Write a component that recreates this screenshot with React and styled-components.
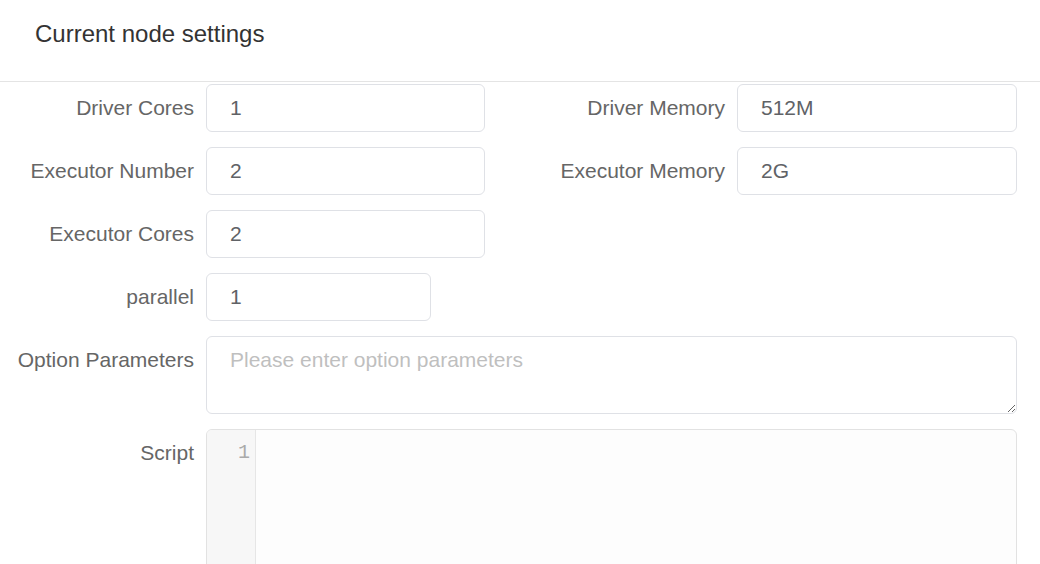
import React from 'react'
import styled, { createGlobalStyle } from 'styled-components'

const GlobalStyle = createGlobalStyle`
    body {
        margin: 0;
        background: #fff;
        font-family: "Liberation Sans", Arial, sans-serif;
        overflow: hidden;
    }
`

const Panel = styled.div`
    width: 1040px;
    height: 564px;
    overflow: hidden;
`

const Header = styled.div`
    height: 82px;
    box-sizing: border-box;
    padding: 20px 35px 0;
    border-bottom: 1px solid #e4e4e4;
    font-size: 24px;
    line-height: 28px;
    color: #333;
`

const Form = styled.div`
    padding-top: 2px;
    width: 1017px;
`

const Row = styled.div`
    display: grid;
    grid-template-columns: 485px 486px;
    column-gap: 46px;
    margin-bottom: 15px;
`

const Item = styled.div`
    display: grid;
    grid-template-columns: 194px 1fr;
    column-gap: 12px;
    align-items: start;
    margin-bottom: ${p => p.$mb || 0}px;
`

const Label = styled.label`
    text-align: right;
    font-size: 21px;
    line-height: 48px;
    color: #666;
    white-space: nowrap;
`

const Input = styled.input`
    box-sizing: border-box;
    width: ${p => p.$w ? `${p.$w}px` : '100%'};
    height: 48px;
    padding: 0 23px;
    border: 1px solid #dfe1e6;
    border-radius: 6px;
    font-family: inherit;
    font-size: 21px;
    color: #606266;
    outline: none;
    background: #fff;
`

const TextArea = styled.textarea`
    box-sizing: border-box;
    display: block;
    width: 100%;
    height: 78px;
    padding: 8px 23px;
    border: 1px solid #dfe1e6;
    border-radius: 6px;
    font-family: inherit;
    font-size: 21px;
    line-height: 30px;
    color: #606266;
    outline: none;
    resize: vertical;
    &::placeholder {
        color: #bfbfbf;
    }
`

const Editor = styled.div`
    display: flex;
    height: 220px;
    border: 1px solid #e2e2e2;
    border-radius: 6px;
    overflow: hidden;
    background: #fdfdfd;
`

const Gutter = styled.div`
    width: 49px;
    background: #f7f7f7;
    border-right: 1px solid #e6e6e6;
    box-sizing: border-box;
    padding: 10px 5px 0 0;
    text-align: right;
    font-family: "Liberation Mono", "Courier New", monospace;
    font-size: 20px;
    line-height: 26px;
    color: #aaa;
`

const Code = styled.div`
    flex: 1;
`

const App = () => {
    return (
        <Panel>
            <GlobalStyle />
            <Header>Current node settings</Header>
            <Form>
                <Row>
                    <Item>
                        <Label>Driver Cores</Label>
                        <Input defaultValue="1" />
                    </Item>
                    <Item>
                        <Label>Driver Memory</Label>
                        <Input defaultValue="512M" />
                    </Item>
                </Row>
                <Row>
                    <Item>
                        <Label>Executor Number</Label>
                        <Input defaultValue="2" />
                    </Item>
                    <Item>
                        <Label>Executor Memory</Label>
                        <Input defaultValue="2G" />
                    </Item>
                </Row>
                <Row>
                    <Item>
                        <Label>Executor Cores</Label>
                        <Input defaultValue="2" />
                    </Item>
                </Row>
                <Item $mb={15}>
                    <Label>parallel</Label>
                    <Input $w={225} defaultValue="1" />
                </Item>
                <Item $mb={15}>
                    <Label>Option Parameters</Label>
                    <TextArea placeholder="Please enter option parameters" />
                </Item>
                <Item>
                    <Label>Script</Label>
                    <Editor>
                        <Gutter>1</Gutter>
                        <Code />
                    </Editor>
                </Item>
            </Form>
        </Panel>
    )
}

export default App
